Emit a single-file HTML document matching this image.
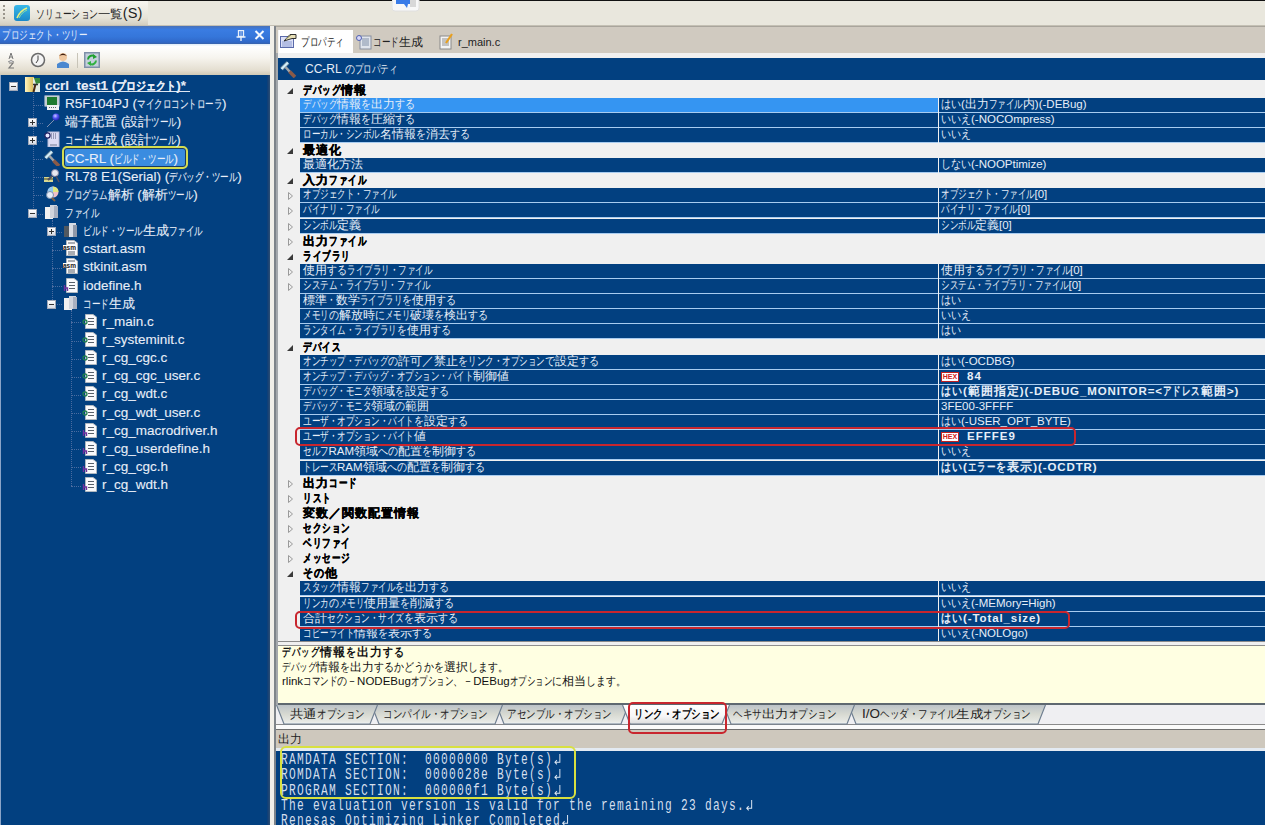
<!DOCTYPE html>
<html><head><meta charset="utf-8">
<style>
*{margin:0;padding:0;box-sizing:border-box}
html,body{width:1265px;height:825px;overflow:hidden;background:#ECE9DF;font-family:"Liberation Sans",sans-serif;font-size:12px;position:relative}
.a{position:absolute}
#topline{left:0;top:0;width:1265px;height:1px;background:#111}
#toolbar{left:0;top:1px;width:1265px;height:25px;background:#E9E7DD;border-bottom:1px solid #C4C0B4}
#solbtn{left:0;top:1px;width:148px;height:24px;background:linear-gradient(#F7F6F1,#E6E3D8 70%,#D3CEC0)}
#lhead{left:0;top:26px;width:270px;height:18px;background:linear-gradient(#4A72B8 0,#3A7CE2 20%,#3576DA 60%,#3068C8 90%,#3A62A8 100%);color:#E6EEFA}
#ltool{left:0;top:44px;width:270px;height:31px;background:linear-gradient(#DDEAF8,#FFFFFF 8%,#F6F4EE 45%,#E4DED0 85%,#D2CAB6)}
#tree{left:0;top:75px;width:270px;height:750px;background:#024080;border-left:1px solid #8AA4C8}
#split{left:270px;top:26px;width:4px;height:799px;background:#F1EFE9}
#vline{left:274px;top:26px;width:2px;height:799px;background:#7E848A}
#pline{left:276px;top:53px;width:2px;height:652px;background:#A4A8AC}
#tabs{left:276px;top:26px;width:989px;height:27px;background:#D0CAC0;border-top:1px solid #A9A59C}
#grid{left:276px;top:53px;width:989px;height:652px;background:#F0F0F0}
#phead{left:278px;top:58px;width:987px;height:22px;background:#024080;color:#E8EEF6}
#desc{left:278px;top:645px;width:987px;height:60px;background:#FFFFE2;border-top:1px solid #8E8E8E;border-bottom:2px solid #5E6870}
#dline{left:278px;top:641px;width:987px;height:1px;background:#8A8A8A}
#btabs{left:276px;top:705px;width:989px;height:20px;background:#EFEFF2;border-bottom:1px solid #8A8A8A}
#wstrip{left:276px;top:725px;width:989px;height:5px;background:#FAFAFA;border-bottom:1px solid #6E6E6E}
#ohead{left:276px;top:730px;width:989px;height:18px;background:#CEC8BD}
#oline{left:276px;top:748px;width:989px;height:3px;background:#E3EAF2}
#out{left:276px;top:751px;width:989px;height:74px;background:#024080}
.cat{left:303px;height:15px;line-height:15px;font-weight:bold;color:#000;font-size:12px;white-space:nowrap;-webkit-text-stroke:.35px #000}
.pn{left:300px;width:638px;height:15px;line-height:12.5px;border-bottom:1px solid #A8CCF0;background:#024080;color:#E6EEF8;padding-left:3px;white-space:nowrap;font-size:11.5px;overflow:hidden}
.pn.sel{background:#3595F2}
.pv{left:939px;width:326px;height:15px;line-height:12.5px;border-bottom:1px solid #A8CCF0;background:#024080;color:#E6EEF8;padding-left:2px;white-space:nowrap;font-size:11.5px;overflow:hidden}
.pv.bold{font-weight:bold;letter-spacing:.9px}
.pv.bold i,.cat i,.dbold i{margin-right:1px}
.hb{letter-spacing:1px}
.hex{display:inline-block;width:18px;height:10px;border:1px solid #C02020;background:#fff;color:#D02020;font-size:7px;line-height:8px;font-weight:bold;text-align:center;vertical-align:middle;margin-right:8px}
.hb{font-weight:bold}
.tt{height:18px;line-height:19px;color:#E8EEF8;font-size:13.5px;white-space:nowrap;-webkit-text-stroke:.1px #E8EEF8}
i{font-style:normal}
.k{display:inline-block;width:12px;font-size:12px}
.h{display:inline-block;width:10px;font-size:12px;transform:scaleX(.83);transform-origin:0 0}
.n{display:inline-block;width:8.5px;font-size:12px;transform:scaleX(.71);transform-origin:0 0}
.tt .k{width:13px;font-size:13px}
.projt{font-weight:bold}
.projt .n{width:10px;transform:scaleX(.83)}
.exb{width:9px;height:9px;background:linear-gradient(#FFFFFF,#D8DCE4);border:1px solid #A0A8B8}
.hb1{position:absolute;left:1px;top:3px;width:5px;height:1px;background:#333}
.vb1{position:absolute;left:3px;top:1px;width:1px;height:5px;background:#333}

.lt{color:#E6EEFA;font-size:12px;white-space:nowrap;line-height:18px}
.grip{left:3px;top:5px;width:2px;height:16px;background:repeating-linear-gradient(#9A968C 0 2px,transparent 2px 4px)}
.toptext{left:36px;top:4px;font-size:14px;color:#222;line-height:18px;white-space:nowrap;transform:scaleX(1.04);transform-origin:0 0}
.ttab{top:30px;height:24px;line-height:24px;font-size:12px;color:#222;white-space:nowrap}
#acttab{left:278px;top:30px;width:75px;height:24px;background:#FFFFFF;border-left:1px solid #F4F4F4}
.phtext{left:305px;top:60px;line-height:18px;font-size:12px;color:#E8EEF6;white-space:nowrap}
.dtext{left:282px;font-size:11.5px;color:#111;white-space:nowrap;line-height:14px}
.btab{top:705px;height:19px}
.btext{top:705px;line-height:18px;font-size:12px;color:#222;white-space:nowrap;transform:scaleX(1.12);transform-origin:0 0}
.otext{left:281px;font-family:"Liberation Mono",monospace;font-size:16px;letter-spacing:1.83px;color:#D4DEEC;white-space:pre;line-height:15px;transform:scaleX(.7);transform-origin:0 0}
.rbox{border:2px solid #C8262E;border-radius:5px}
.ybox{border:2.5px solid #D8E040;border-radius:6px}
.ret{display:inline-block;width:11.4px;height:12px;vertical-align:-2px;transform:scaleX(1.3);transform-origin:0 0}
.vl{border-left:1px dotted #4A6CA0;width:1px}
.hl{border-top:1px dotted #4A6CA0;height:1px}
</style></head><body>
<div class="a" id="topline"></div>
<div class="a" id="toolbar"></div>
<div class="a" id="solbtn"></div>
<div class="a grip"></div>
<svg class="a" style="left:13px;top:4px" width="18" height="18" viewBox="0 0 18 18"><defs><linearGradient id="g1" x1="0" y1="0" x2="0" y2="1"><stop offset="0" stop-color="#38B8E8"/><stop offset="1" stop-color="#1A88C8"/></linearGradient></defs><rect x="1" y="1" width="16" height="16" rx="3" fill="url(#g1)"/><path d="M4 14 C6 9 9 6 14 4" stroke="#E8F080" stroke-width="1.6" fill="none"/><path d="M6 14 C8 10 10 8 14 6" stroke="#90E0A0" stroke-width="1" fill="none"/></svg>
<div class="a toptext"><i class="n">ソ</i><i class="n">リ</i><i class="n">ュ</i><i class="n">ー</i><i class="n">シ</i><i class="n">ョ</i><i class="n">ン</i><i class="k">一</i><i class="k">覧</i>(S)</div>
<svg class="a" style="left:392px;top:0px" width="28" height="12" viewBox="0 0 28 12"><rect x="0" y="-4" width="27" height="15" rx="3" fill="#F8F8F8" stroke="#E0E0E0"/><path d="M4 0 H20 V4 H16 L15 8 L12 4 H4Z" fill="#3A7CE8"/><rect x="18" y="0" width="6" height="7" fill="#D8D8D8"/></svg>
<div class="a" id="lhead"></div>
<div class="a lt" style="left:2px;top:26px"><i class="n">プ</i><i class="n">ロ</i><i class="n">ジ</i><i class="n">ェ</i><i class="n">ク</i><i class="n">ト</i><i class="n">・</i><i class="n">ツ</i><i class="n">リ</i><i class="n">ー</i></div>
<svg class="a" style="left:236px;top:30px" width="10" height="11" viewBox="0 0 10 11"><rect x="2.5" y="0.5" width="5" height="6" fill="none" stroke="#E8F0FA" stroke-width="1.3"/><path d="M5 1v5" stroke="#B0C4E8" stroke-width="1"/><path d="M0.5 7h9M5 7v4" stroke="#E8F0FA" stroke-width="1.4"/></svg>
<svg class="a" style="left:254px;top:30px" width="11" height="10" viewBox="0 0 11 10"><path d="M1.5 1L9.5 9M9.5 1L1.5 9" stroke="#F4F8FF" stroke-width="2"/></svg>
<div class="a" id="ltool"></div>
<svg class="a" style="left:6px;top:52px" width="10" height="17" viewBox="0 0 10 17"><path d="M3 7 L5 1 L7 7 M3.5 5h3" stroke="#777" stroke-width="1" fill="none"/><path d="M2 10 Q5 7 8 10" stroke="#888" fill="#E8E8F0"/><path d="M3 11 H7 L3 16 H8" stroke="#777" stroke-width="1.2" fill="none"/></svg>
<svg class="a" style="left:30px;top:52px" width="16" height="16" viewBox="0 0 16 16"><circle cx="8" cy="8" r="6.5" fill="#F4F4F4" stroke="#6A6A6A" stroke-width="1.5"/><path d="M8 3.5V8L6 11" stroke="#444" stroke-width="1" fill="none"/></svg>
<svg class="a" style="left:56px;top:52px" width="14" height="17" viewBox="0 0 14 17"><circle cx="7" cy="5" r="4" fill="#F0C8A0"/><path d="M3 4 Q7 -1 11 4 Q7 2 3 4Z" fill="#402010"/><path d="M1 16 V12 Q7 7 13 12 V16Z" fill="#4A88D0"/></svg>
<div class="a" style="left:77px;top:53px;width:1px;height:15px;background:#C8C4B8"></div>
<svg class="a" style="left:84px;top:52px" width="16" height="16" viewBox="0 0 16 16"><rect x="0.75" y="0.75" width="14.5" height="14.5" fill="#C4D0DC" stroke="#7E90A8" stroke-width="1.5"/><path d="M4 7.5 A4 4 0 0 1 10.5 4.5" stroke="#20A030" stroke-width="2" fill="none"/><path d="M9 2 L13 5 L9 7Z" fill="#20A030"/><path d="M12 8.5 A4 4 0 0 1 5.5 11.5" stroke="#30B040" stroke-width="2" fill="none"/><path d="M7 14 L3 11 L7 9Z" fill="#30B040"/></svg>
<div class="a" id="tree"></div>
<div class="a" style="left:45px;top:91px;width:145px;height:1px;background:#DDE6F2"></div>
<div class="a" style="left:62px;top:146px;width:126px;height:23px;border:2px solid #D4DC50;border-radius:5px;background:#3A8CE0;box-shadow:inset 0 0 0 1px #1A3A60"></div>
<div class="a vl" style="left:33px;top:92.5px;height:121.0px"></div>
<div class="a hl" style="left:33px;top:104.6px;width:10px"></div>
<div class="a hl" style="left:38px;top:122.8px;width:5px"></div>
<div class="a hl" style="left:38px;top:140.9px;width:5px"></div>
<div class="a hl" style="left:33px;top:159.1px;width:10px"></div>
<div class="a hl" style="left:33px;top:177.2px;width:10px"></div>
<div class="a hl" style="left:33px;top:195.3px;width:10px"></div>
<div class="a hl" style="left:38px;top:213.5px;width:5px"></div>
<div class="a vl" style="left:52px;top:219.5px;height:84.7px"></div>
<div class="a hl" style="left:57px;top:231.6px;width:5px"></div>
<div class="a hl" style="left:52px;top:249.8px;width:10px"></div>
<div class="a hl" style="left:52px;top:267.9px;width:10px"></div>
<div class="a hl" style="left:52px;top:286.0px;width:10px"></div>
<div class="a hl" style="left:57px;top:304.2px;width:5px"></div>
<div class="a vl" style="left:71px;top:310.2px;height:175.4px"></div>
<div class="a hl" style="left:71px;top:322.3px;width:10px"></div>
<div class="a hl" style="left:71px;top:340.5px;width:10px"></div>
<div class="a hl" style="left:71px;top:358.6px;width:10px"></div>
<div class="a hl" style="left:71px;top:376.7px;width:10px"></div>
<div class="a hl" style="left:71px;top:394.9px;width:10px"></div>
<div class="a hl" style="left:71px;top:413.0px;width:10px"></div>
<div class="a hl" style="left:71px;top:431.2px;width:10px"></div>
<div class="a hl" style="left:71px;top:449.3px;width:10px"></div>
<div class="a hl" style="left:71px;top:467.4px;width:10px"></div>
<div class="a hl" style="left:71px;top:485.6px;width:10px"></div>
<svg class="a" style="left:25px;top:77.00px" width="16" height="16" viewBox="0 0 16 16"><defs><linearGradient id="pj" x1="0" x2="1"><stop offset="0" stop-color="#FFF4C0"/><stop offset="1" stop-color="#D8B850"/></linearGradient></defs><rect x="0" y="0" width="9" height="15" fill="url(#pj)"/><rect x="8" y="1" width="7" height="14" fill="#E4ECE4"/><path d="M9 1 H15 V6 L11 7Z" fill="#3A8A3A"/><path d="M8.5 15 L10.5 7" stroke="#4A2A10" stroke-width="2"/><path d="M8 7.5 H13" stroke="#303030" stroke-width="1.5"/></svg>
<div class="a tt projt" style="left:45px;top:76.00px">ccrl_test1 (<i class="n">プ</i><i class="n">ロ</i><i class="n">ジ</i><i class="n">ェ</i><i class="n">ク</i><i class="n">ト</i>)*</div>
<div class="a exb" style="left:9px;top:82.00px"><span class="hb1"></span></div>
<svg class="a" style="left:44px;top:95.14px" width="16" height="16" viewBox="0 0 16 16"><rect x="0.5" y="0.5" width="15" height="11" fill="#D8DEE4"/><path d="M2 0.5v11M4 0.5v11M6 0.5v11M8 0.5v11M10 0.5v11M12 0.5v11M14 0.5v11" stroke="#A8B0B8" stroke-width=".8"/><rect x="3" y="2" width="10" height="8" fill="#1E7A30"/><rect x="3" y="10" width="12" height="5" fill="#F0F2F4"/><path d="M5 12.5h8" stroke="#606870" stroke-dasharray="1 1"/></svg>
<div class="a tt" style="left:65px;top:94.14px">R5F104PJ (<i class="n">マ</i><i class="n">イ</i><i class="n">ク</i><i class="n">ロ</i><i class="n">コ</i><i class="n">ン</i><i class="n">ト</i><i class="n">ロ</i><i class="n">ー</i><i class="n">ラ</i>)</div>
<svg class="a" style="left:44px;top:113.28px" width="16" height="16" viewBox="0 0 16 16"><defs><radialGradient id="pb" cx=".4" cy=".35" r=".7"><stop offset="0" stop-color="#C8C8FF"/><stop offset=".5" stop-color="#5050F0"/><stop offset="1" stop-color="#2020A0"/></radialGradient></defs><path d="M3 14 L11 6" stroke="#8090B0" stroke-width="1"/><circle cx="12" cy="4" r="3.6" fill="url(#pb)"/></svg>
<div class="a tt" style="left:65px;top:112.28px"><i class="k">端</i><i class="k">子</i><i class="k">配</i><i class="k">置</i> (<i class="k">設</i><i class="k">計</i><i class="n">ツ</i><i class="n">ー</i><i class="n">ル</i>)</div>
<div class="a exb" style="left:28px;top:118.28px"><span class="hb1"></span><span class="vb1"></span></div>
<svg class="a" style="left:44px;top:131.42px" width="16" height="16" viewBox="0 0 16 16"><rect x="4" y="1" width="11" height="15" fill="#DCDCF4" stroke="#B8BCD8"/><path d="M7 3h6M7 5h6M7 7h6" stroke="#505878" stroke-dasharray="1 1"/><circle cx="3.5" cy="4.5" r="2.6" fill="#E8E8FF" stroke="#202060" stroke-width="1.2"/><path d="M6 14h7" stroke="#707890"/></svg>
<div class="a tt" style="left:65px;top:130.42px"><i class="n">コ</i><i class="n">ー</i><i class="n">ド</i><i class="k">生</i><i class="k">成</i> (<i class="k">設</i><i class="k">計</i><i class="n">ツ</i><i class="n">ー</i><i class="n">ル</i>)</div>
<div class="a exb" style="left:28px;top:136.42px"><span class="hb1"></span><span class="vb1"></span></div>
<svg class="a" style="left:44px;top:149.56px" width="16" height="16" viewBox="0 0 16 16"><path d="M1.5 8 L8 1.5" stroke="#5A7890" stroke-width="4"/><path d="M1.5 8 L8 1.5" stroke="#D4EEF8" stroke-width="2.4"/><path d="M5.5 6 L10 11" stroke="#A0A4A8" stroke-width="2.6"/><path d="M9.5 10.5 L15 16" stroke="#8A5A48" stroke-width="3.6"/></svg>
<div class="a tt selt" style="left:65px;top:148.56px">CC-RL (<i class="n">ビ</i><i class="n">ル</i><i class="n">ド</i><i class="n">・</i><i class="n">ツ</i><i class="n">ー</i><i class="n">ル</i>)</div>
<svg class="a" style="left:44px;top:167.70px" width="16" height="16" viewBox="0 0 16 16"><rect x="0" y="9" width="9" height="5" fill="#D8D890"/><path d="M0 11h9" stroke="#404020"/><circle cx="11" cy="5" r="3.5" fill="#E8E8F0" stroke="#8080A0"/><path d="M8 8 L4 12" stroke="#505060" stroke-width="2"/><path d="M12 8 L15 14" stroke="#505060" stroke-width="1.5"/></svg>
<div class="a tt" style="left:65px;top:166.70px">RL78 E1(Serial) (<i class="n">デ</i><i class="n">バ</i><i class="n">ッ</i><i class="n">グ</i><i class="n">・</i><i class="n">ツ</i><i class="n">ー</i><i class="n">ル</i>)</div>
<svg class="a" style="left:44px;top:185.84px" width="16" height="16" viewBox="0 0 16 16"><circle cx="9" cy="6" r="5.5" fill="#F0C0C8"/><path d="M9 6 L9 0.5 A5.5 5.5 0 0 1 14.5 6Z" fill="#E0E880"/><path d="M9 6 L3.5 6 A5.5 5.5 0 0 1 9 0.5Z" fill="#90C8F0"/><circle cx="6" cy="9" r="3.5" fill="#E8EEF8" stroke="#7890B0"/><path d="M8 12 L11 15" stroke="#806040" stroke-width="2"/></svg>
<div class="a tt" style="left:65px;top:184.84px"><i class="n">プ</i><i class="n">ロ</i><i class="n">グ</i><i class="n">ラ</i><i class="n">ム</i><i class="k">解</i><i class="k">析</i> (<i class="k">解</i><i class="k">析</i><i class="n">ツ</i><i class="n">ー</i><i class="n">ル</i>)</div>
<svg class="a" style="left:44px;top:203.98px" width="16" height="16" viewBox="0 0 16 16"><rect x="1" y="3" width="8" height="12" fill="#F0F0F0"/><rect x="6" y="1" width="7" height="13" fill="#D0D4DC"/><rect x="10" y="2" width="4" height="12" fill="#A8B0C0"/></svg>
<div class="a tt" style="left:65px;top:202.98px"><i class="n">フ</i><i class="n">ァ</i><i class="n">イ</i><i class="n">ル</i></div>
<div class="a exb" style="left:28px;top:208.98px"><span class="hb1"></span></div>
<svg class="a" style="left:63px;top:222.12px" width="16" height="16" viewBox="0 0 16 16"><rect x="1" y="4" width="8" height="11" fill="#505860"/><rect x="6" y="1" width="7" height="14" fill="#D8DCE4"/><rect x="10" y="3" width="4" height="12" fill="#9098A8"/></svg>
<div class="a tt" style="left:83px;top:221.12px"><i class="n">ビ</i><i class="n">ル</i><i class="n">ド</i><i class="n">・</i><i class="n">ツ</i><i class="n">ー</i><i class="n">ル</i><i class="k">生</i><i class="k">成</i><i class="n">フ</i><i class="n">ァ</i><i class="n">イ</i><i class="n">ル</i></div>
<div class="a exb" style="left:47px;top:227.12px"><span class="hb1"></span><span class="vb1"></span></div>
<svg class="a" style="left:63px;top:240.26px" width="16" height="16" viewBox="0 0 16 16"><path d="M3.5 0.5 H11 L14.5 3 V15.5 H3.5Z" fill="#FAFAFC" stroke="#B0B8C0"/><path d="M5 3h7" stroke="#58606A"/><rect x="0" y="5" width="14" height="5" fill="#FFFFFF"/><text x="0" y="9.6" font-size="6.5" fill="#202020" font-family="Liberation Sans" font-weight="bold">asm</text><path d="M5 12h7M5 14h7" stroke="#58606A"/></svg>
<div class="a tt" style="left:83px;top:239.26px">cstart.asm</div>
<svg class="a" style="left:63px;top:258.40px" width="16" height="16" viewBox="0 0 16 16"><path d="M3.5 0.5 H11 L14.5 3 V15.5 H3.5Z" fill="#FAFAFC" stroke="#B0B8C0"/><path d="M5 3h7" stroke="#58606A"/><rect x="0" y="5" width="14" height="5" fill="#FFFFFF"/><text x="0" y="9.6" font-size="6.5" fill="#202020" font-family="Liberation Sans" font-weight="bold">asm</text><path d="M5 12h7M5 14h7" stroke="#58606A"/></svg>
<div class="a tt" style="left:83px;top:257.40px">stkinit.asm</div>
<svg class="a" style="left:63px;top:276.54px" width="16" height="16" viewBox="0 0 16 16"><path d="M3.5 1.5 H11 L14.5 4 V15.5 H3.5Z" fill="#FAFAFC" stroke="#B0B8C0"/><path d="M6 5.5h6M6 8.5h6M6 11.5h6" stroke="#58606A"/><path d="M1.5 8v6M1.5 11h3v3" stroke="#7030A0" stroke-width="1.4" fill="none"/></svg>
<div class="a tt" style="left:83px;top:275.54px">iodefine.h</div>
<svg class="a" style="left:63px;top:294.68px" width="16" height="16" viewBox="0 0 16 16"><rect x="1" y="3" width="8" height="12" fill="#F0F0F0"/><rect x="6" y="1" width="7" height="13" fill="#D0D4DC"/><rect x="10" y="2" width="4" height="12" fill="#A8B0C0"/></svg>
<div class="a tt" style="left:83px;top:293.68px"><i class="n">コ</i><i class="n">ー</i><i class="n">ド</i><i class="k">生</i><i class="k">成</i></div>
<div class="a exb" style="left:47px;top:299.68px"><span class="hb1"></span></div>
<svg class="a" style="left:82px;top:312.82px" width="16" height="16" viewBox="0 0 16 16"><path d="M3.5 1.5 H11 L14.5 4 V15.5 H3.5Z" fill="#FAFAFC" stroke="#B0B8C0"/><path d="M6 5.5h6M6 8.5h6M6 11.5h6" stroke="#58606A"/><circle cx="3" cy="9" r="2" fill="none" stroke="#208050" stroke-width="1.3"/></svg>
<div class="a tt" style="left:102px;top:311.82px">r_main.c</div>
<svg class="a" style="left:82px;top:330.96px" width="16" height="16" viewBox="0 0 16 16"><path d="M3.5 1.5 H11 L14.5 4 V15.5 H3.5Z" fill="#FAFAFC" stroke="#B0B8C0"/><path d="M6 5.5h6M6 8.5h6M6 11.5h6" stroke="#58606A"/><circle cx="3" cy="9" r="2" fill="none" stroke="#208050" stroke-width="1.3"/></svg>
<div class="a tt" style="left:102px;top:329.96px">r_systeminit.c</div>
<svg class="a" style="left:82px;top:349.10px" width="16" height="16" viewBox="0 0 16 16"><path d="M3.5 1.5 H11 L14.5 4 V15.5 H3.5Z" fill="#FAFAFC" stroke="#B0B8C0"/><path d="M6 5.5h6M6 8.5h6M6 11.5h6" stroke="#58606A"/><circle cx="3" cy="9" r="2" fill="none" stroke="#208050" stroke-width="1.3"/></svg>
<div class="a tt" style="left:102px;top:348.10px">r_cg_cgc.c</div>
<svg class="a" style="left:82px;top:367.24px" width="16" height="16" viewBox="0 0 16 16"><path d="M3.5 1.5 H11 L14.5 4 V15.5 H3.5Z" fill="#FAFAFC" stroke="#B0B8C0"/><path d="M6 5.5h6M6 8.5h6M6 11.5h6" stroke="#58606A"/><circle cx="3" cy="9" r="2" fill="none" stroke="#208050" stroke-width="1.3"/></svg>
<div class="a tt" style="left:102px;top:366.24px">r_cg_cgc_user.c</div>
<svg class="a" style="left:82px;top:385.38px" width="16" height="16" viewBox="0 0 16 16"><path d="M3.5 1.5 H11 L14.5 4 V15.5 H3.5Z" fill="#FAFAFC" stroke="#B0B8C0"/><path d="M6 5.5h6M6 8.5h6M6 11.5h6" stroke="#58606A"/><circle cx="3" cy="9" r="2" fill="none" stroke="#208050" stroke-width="1.3"/></svg>
<div class="a tt" style="left:102px;top:384.38px">r_cg_wdt.c</div>
<svg class="a" style="left:82px;top:403.52px" width="16" height="16" viewBox="0 0 16 16"><path d="M3.5 1.5 H11 L14.5 4 V15.5 H3.5Z" fill="#FAFAFC" stroke="#B0B8C0"/><path d="M6 5.5h6M6 8.5h6M6 11.5h6" stroke="#58606A"/><circle cx="3" cy="9" r="2" fill="none" stroke="#208050" stroke-width="1.3"/></svg>
<div class="a tt" style="left:102px;top:402.52px">r_cg_wdt_user.c</div>
<svg class="a" style="left:82px;top:421.66px" width="16" height="16" viewBox="0 0 16 16"><path d="M3.5 1.5 H11 L14.5 4 V15.5 H3.5Z" fill="#FAFAFC" stroke="#B0B8C0"/><path d="M6 5.5h6M6 8.5h6M6 11.5h6" stroke="#58606A"/><path d="M1.5 8v6M1.5 11h3v3" stroke="#7030A0" stroke-width="1.4" fill="none"/></svg>
<div class="a tt" style="left:102px;top:420.66px">r_cg_macrodriver.h</div>
<svg class="a" style="left:82px;top:439.80px" width="16" height="16" viewBox="0 0 16 16"><path d="M3.5 1.5 H11 L14.5 4 V15.5 H3.5Z" fill="#FAFAFC" stroke="#B0B8C0"/><path d="M6 5.5h6M6 8.5h6M6 11.5h6" stroke="#58606A"/><path d="M1.5 8v6M1.5 11h3v3" stroke="#7030A0" stroke-width="1.4" fill="none"/></svg>
<div class="a tt" style="left:102px;top:438.80px">r_cg_userdefine.h</div>
<svg class="a" style="left:82px;top:457.94px" width="16" height="16" viewBox="0 0 16 16"><path d="M3.5 1.5 H11 L14.5 4 V15.5 H3.5Z" fill="#FAFAFC" stroke="#B0B8C0"/><path d="M6 5.5h6M6 8.5h6M6 11.5h6" stroke="#58606A"/><path d="M1.5 8v6M1.5 11h3v3" stroke="#7030A0" stroke-width="1.4" fill="none"/></svg>
<div class="a tt" style="left:102px;top:456.94px">r_cg_cgc.h</div>
<svg class="a" style="left:82px;top:476.08px" width="16" height="16" viewBox="0 0 16 16"><path d="M3.5 1.5 H11 L14.5 4 V15.5 H3.5Z" fill="#FAFAFC" stroke="#B0B8C0"/><path d="M6 5.5h6M6 8.5h6M6 11.5h6" stroke="#58606A"/><path d="M1.5 8v6M1.5 11h3v3" stroke="#7030A0" stroke-width="1.4" fill="none"/></svg>
<div class="a tt" style="left:102px;top:475.08px">r_cg_wdt.h</div>
<div class="a" style="left:267px;top:75px;width:3px;height:750px;background:linear-gradient(90deg,#0A3C78,#2E4E72)"></div>
<div class="a" id="split"></div>
<div class="a" id="vline"></div>
<div class="a" id="tabs"></div>
<div class="a" id="acttab"></div>
<svg class="a" style="left:280px;top:32px" width="17" height="16" viewBox="0 0 17 16"><rect x="0.5" y="4.5" width="13" height="11" fill="#DCE0F6" stroke="#5A6AAA"/><path d="M2 10h10M2 12h10M2 14h10" stroke="#8A9AD0"/><path d="M4 9 L10 2.5 L16 2.5 L16 6.5 L12 6.5 Z" fill="#E8E0B8" stroke="#303030" stroke-width="1"/><path d="M6 7 L11 3" stroke="#909060" stroke-width="1"/></svg>
<div class="a ttab" style="left:301px;font-size:12.5px"><i class="n">プ</i><i class="n">ロ</i><i class="n">パ</i><i class="n">テ</i><i class="n">ィ</i></div>
<svg class="a" style="left:356px;top:34px" width="16" height="16" viewBox="0 0 16 16"><rect x="4" y="2" width="11" height="13" fill="#E0E4EC" stroke="#8890A0"/><path d="M6 5h7M6 7h7M6 9h7M6 11h7" stroke="#8090A8"/><circle cx="3" cy="4" r="2.5" fill="#D8D8F8" stroke="#5060B0"/></svg>
<div class="a ttab" style="left:373px"><i class="n">コ</i><i class="n">ー</i><i class="n">ド</i><i class="k">生</i><i class="k">成</i></div>
<svg class="a" style="left:439px;top:33px" width="15" height="17" viewBox="0 0 15 17"><rect x="1" y="3" width="11" height="13" fill="#F4F4F4" stroke="#8A8A8A"/><path d="M3 6h6M3 8h7M3 10h7M3 12h7" stroke="#909090"/><path d="M7 10 L13 1" stroke="#E8A020" stroke-width="2.2"/></svg>
<div class="a ttab" style="left:458px;font-size:11px">r_main.c</div>
<div class="a" id="grid"></div>
<div class="a" id="pline"></div>
<div class="a" id="phead"></div>
<svg class="a" style="left:280px;top:61px" width="17" height="17" viewBox="0 0 17 17"><path d="M1.5 8 L8 1.5" stroke="#5A7890" stroke-width="4"/><path d="M1.5 8 L8 1.5" stroke="#D4EEF8" stroke-width="2.4"/><path d="M5.5 6 L10 11" stroke="#A0A4A8" stroke-width="2.6"/><path d="M9.5 10.5 L15 16" stroke="#8A5A48" stroke-width="3.6"/></svg>
<div class="a phtext">CC-RL <i class="h">の</i><i class="n">プ</i><i class="n">ロ</i><i class="n">パ</i><i class="n">テ</i><i class="n">ィ</i></div>
<svg class="a" style="left:286px;top:86.50px" width="8" height="8" viewBox="0 0 8 8"><path d="M7 1 L7 7 L1 7 Z" fill="#3A3A3A"/></svg>
<div class="a cat" style="top:82.50px"><i class="n">デ</i><i class="n">バ</i><i class="n">ッ</i><i class="n">グ</i><i class="k">情</i><i class="k">報</i></div>

<div class="a pn sel" style="top:97.62px"><i class="n">デ</i><i class="n">バ</i><i class="n">ッ</i><i class="n">グ</i><i class="k">情</i><i class="k">報</i><i class="h">を</i><i class="k">出</i><i class="k">力</i><i class="h">す</i><i class="h">る</i></div>
<div class="a pv" style="top:97.62px"><i class="h">は</i><i class="h">い</i>(<i class="k">出</i><i class="k">力</i><i class="n">フ</i><i class="n">ァ</i><i class="n">イ</i><i class="n">ル</i><i class="k">内</i>)(-DEBug)</div>

<div class="a pn" style="top:112.74px"><i class="n">デ</i><i class="n">バ</i><i class="n">ッ</i><i class="n">グ</i><i class="k">情</i><i class="k">報</i><i class="h">を</i><i class="k">圧</i><i class="k">縮</i><i class="h">す</i><i class="h">る</i></div>
<div class="a pv" style="top:112.74px"><i class="h">い</i><i class="h">い</i><i class="h">え</i>(-NOCOmpress)</div>

<div class="a pn" style="top:127.86px"><i class="n">ロ</i><i class="n">ー</i><i class="n">カ</i><i class="n">ル</i><i class="n">・</i><i class="n">シ</i><i class="n">ン</i><i class="n">ボ</i><i class="n">ル</i><i class="k">名</i><i class="k">情</i><i class="k">報</i><i class="h">を</i><i class="k">消</i><i class="k">去</i><i class="h">す</i><i class="h">る</i></div>
<div class="a pv" style="top:127.86px"><i class="h">い</i><i class="h">い</i><i class="h">え</i></div>
<svg class="a" style="left:286px;top:146.98px" width="8" height="8" viewBox="0 0 8 8"><path d="M7 1 L7 7 L1 7 Z" fill="#3A3A3A"/></svg>
<div class="a cat" style="top:142.98px"><i class="k">最</i><i class="k">適</i><i class="k">化</i></div>

<div class="a pn" style="top:158.10px"><i class="k">最</i><i class="k">適</i><i class="k">化</i><i class="k">方</i><i class="k">法</i></div>
<div class="a pv" style="top:158.10px"><i class="h">し</i><i class="h">な</i><i class="h">い</i>(-NOOPtimize)</div>
<svg class="a" style="left:286px;top:177.22px" width="8" height="8" viewBox="0 0 8 8"><path d="M7 1 L7 7 L1 7 Z" fill="#3A3A3A"/></svg>
<div class="a cat" style="top:173.22px"><i class="k">入</i><i class="k">力</i><i class="n">フ</i><i class="n">ァ</i><i class="n">イ</i><i class="n">ル</i></div>
<svg class="a" style="left:286px;top:191.34px" width="8" height="10" viewBox="0 0 8 10"><path d="M2.5 1.5 L6.5 5 L2.5 8.5 Z" fill="none" stroke="#9A9A9A" stroke-width="1"/></svg>
<div class="a pn" style="top:188.34px"><i class="n">オ</i><i class="n">ブ</i><i class="n">ジ</i><i class="n">ェ</i><i class="n">ク</i><i class="n">ト</i><i class="n">・</i><i class="n">フ</i><i class="n">ァ</i><i class="n">イ</i><i class="n">ル</i></div>
<div class="a pv" style="top:188.34px"><i class="n">オ</i><i class="n">ブ</i><i class="n">ジ</i><i class="n">ェ</i><i class="n">ク</i><i class="n">ト</i><i class="n">・</i><i class="n">フ</i><i class="n">ァ</i><i class="n">イ</i><i class="n">ル</i>[0]</div>
<svg class="a" style="left:286px;top:206.46px" width="8" height="10" viewBox="0 0 8 10"><path d="M2.5 1.5 L6.5 5 L2.5 8.5 Z" fill="none" stroke="#9A9A9A" stroke-width="1"/></svg>
<div class="a pn" style="top:203.46px"><i class="n">バ</i><i class="n">イ</i><i class="n">ナ</i><i class="n">リ</i><i class="n">・</i><i class="n">フ</i><i class="n">ァ</i><i class="n">イ</i><i class="n">ル</i></div>
<div class="a pv" style="top:203.46px"><i class="n">バ</i><i class="n">イ</i><i class="n">ナ</i><i class="n">リ</i><i class="n">・</i><i class="n">フ</i><i class="n">ァ</i><i class="n">イ</i><i class="n">ル</i>[0]</div>
<svg class="a" style="left:286px;top:221.58px" width="8" height="10" viewBox="0 0 8 10"><path d="M2.5 1.5 L6.5 5 L2.5 8.5 Z" fill="none" stroke="#9A9A9A" stroke-width="1"/></svg>
<div class="a pn" style="top:218.58px"><i class="n">シ</i><i class="n">ン</i><i class="n">ボ</i><i class="n">ル</i><i class="k">定</i><i class="k">義</i></div>
<div class="a pv" style="top:218.58px"><i class="n">シ</i><i class="n">ン</i><i class="n">ボ</i><i class="n">ル</i><i class="k">定</i><i class="k">義</i>[0]</div>
<svg class="a" style="left:286px;top:236.70px" width="8" height="10" viewBox="0 0 8 10"><path d="M2.5 1.5 L6.5 5 L2.5 8.5 Z" fill="none" stroke="#9A9A9A" stroke-width="1"/></svg>
<div class="a cat" style="top:233.70px"><i class="k">出</i><i class="k">力</i><i class="n">フ</i><i class="n">ァ</i><i class="n">イ</i><i class="n">ル</i></div>
<svg class="a" style="left:286px;top:252.82px" width="8" height="8" viewBox="0 0 8 8"><path d="M7 1 L7 7 L1 7 Z" fill="#3A3A3A"/></svg>
<div class="a cat" style="top:248.82px"><i class="n">ラ</i><i class="n">イ</i><i class="n">ブ</i><i class="n">ラ</i><i class="n">リ</i></div>
<svg class="a" style="left:286px;top:266.94px" width="8" height="10" viewBox="0 0 8 10"><path d="M2.5 1.5 L6.5 5 L2.5 8.5 Z" fill="none" stroke="#9A9A9A" stroke-width="1"/></svg>
<div class="a pn" style="top:263.94px"><i class="k">使</i><i class="k">用</i><i class="h">す</i><i class="h">る</i><i class="n">ラ</i><i class="n">イ</i><i class="n">ブ</i><i class="n">ラ</i><i class="n">リ</i><i class="n">・</i><i class="n">フ</i><i class="n">ァ</i><i class="n">イ</i><i class="n">ル</i></div>
<div class="a pv" style="top:263.94px"><i class="k">使</i><i class="k">用</i><i class="h">す</i><i class="h">る</i><i class="n">ラ</i><i class="n">イ</i><i class="n">ブ</i><i class="n">ラ</i><i class="n">リ</i><i class="n">・</i><i class="n">フ</i><i class="n">ァ</i><i class="n">イ</i><i class="n">ル</i>[0]</div>
<svg class="a" style="left:286px;top:282.06px" width="8" height="10" viewBox="0 0 8 10"><path d="M2.5 1.5 L6.5 5 L2.5 8.5 Z" fill="none" stroke="#9A9A9A" stroke-width="1"/></svg>
<div class="a pn" style="top:279.06px"><i class="n">シ</i><i class="n">ス</i><i class="n">テ</i><i class="n">ム</i><i class="n">・</i><i class="n">ラ</i><i class="n">イ</i><i class="n">ブ</i><i class="n">ラ</i><i class="n">リ</i><i class="n">・</i><i class="n">フ</i><i class="n">ァ</i><i class="n">イ</i><i class="n">ル</i></div>
<div class="a pv" style="top:279.06px"><i class="n">シ</i><i class="n">ス</i><i class="n">テ</i><i class="n">ム</i><i class="n">・</i><i class="n">ラ</i><i class="n">イ</i><i class="n">ブ</i><i class="n">ラ</i><i class="n">リ</i><i class="n">・</i><i class="n">フ</i><i class="n">ァ</i><i class="n">イ</i><i class="n">ル</i>[0]</div>

<div class="a pn" style="top:294.18px"><i class="k">標</i><i class="k">準</i><i class="n">・</i><i class="k">数</i><i class="k">学</i><i class="n">ラ</i><i class="n">イ</i><i class="n">ブ</i><i class="n">ラ</i><i class="n">リ</i><i class="h">を</i><i class="k">使</i><i class="k">用</i><i class="h">す</i><i class="h">る</i></div>
<div class="a pv" style="top:294.18px"><i class="h">は</i><i class="h">い</i></div>

<div class="a pn" style="top:309.30px"><i class="n">メ</i><i class="n">モ</i><i class="n">リ</i><i class="h">の</i><i class="k">解</i><i class="k">放</i><i class="k">時</i><i class="h">に</i><i class="n">メ</i><i class="n">モ</i><i class="n">リ</i><i class="k">破</i><i class="k">壊</i><i class="h">を</i><i class="k">検</i><i class="k">出</i><i class="h">す</i><i class="h">る</i></div>
<div class="a pv" style="top:309.30px"><i class="h">い</i><i class="h">い</i><i class="h">え</i></div>

<div class="a pn" style="top:324.42px"><i class="n">ラ</i><i class="n">ン</i><i class="n">タ</i><i class="n">イ</i><i class="n">ム</i><i class="n">・</i><i class="n">ラ</i><i class="n">イ</i><i class="n">ブ</i><i class="n">ラ</i><i class="n">リ</i><i class="h">を</i><i class="k">使</i><i class="k">用</i><i class="h">す</i><i class="h">る</i></div>
<div class="a pv" style="top:324.42px"><i class="h">は</i><i class="h">い</i></div>
<svg class="a" style="left:286px;top:343.54px" width="8" height="8" viewBox="0 0 8 8"><path d="M7 1 L7 7 L1 7 Z" fill="#3A3A3A"/></svg>
<div class="a cat" style="top:339.54px"><i class="n">デ</i><i class="n">バ</i><i class="n">イ</i><i class="n">ス</i></div>

<div class="a pn" style="top:354.66px"><i class="n">オ</i><i class="n">ン</i><i class="n">チ</i><i class="n">ッ</i><i class="n">プ</i><i class="n">・</i><i class="n">デ</i><i class="n">バ</i><i class="n">ッ</i><i class="n">グ</i><i class="h">の</i><i class="k">許</i><i class="k">可</i><i class="k">／</i><i class="k">禁</i><i class="k">止</i><i class="h">を</i><i class="n">リ</i><i class="n">ン</i><i class="n">ク</i><i class="n">・</i><i class="n">オ</i><i class="n">プ</i><i class="n">シ</i><i class="n">ョ</i><i class="n">ン</i><i class="h">で</i><i class="k">設</i><i class="k">定</i><i class="h">す</i><i class="h">る</i></div>
<div class="a pv" style="top:354.66px"><i class="h">は</i><i class="h">い</i>(-OCDBG)</div>

<div class="a pn" style="top:369.78px"><i class="n">オ</i><i class="n">ン</i><i class="n">チ</i><i class="n">ッ</i><i class="n">プ</i><i class="n">・</i><i class="n">デ</i><i class="n">バ</i><i class="n">ッ</i><i class="n">グ</i><i class="n">・</i><i class="n">オ</i><i class="n">プ</i><i class="n">シ</i><i class="n">ョ</i><i class="n">ン</i><i class="n">・</i><i class="n">バ</i><i class="n">イ</i><i class="n">ト</i><i class="k">制</i><i class="k">御</i><i class="k">値</i></div>
<div class="a pv" style="top:369.78px"><span class="hex">HEX</span><b class="hb">84</b></div>

<div class="a pn" style="top:384.90px"><i class="n">デ</i><i class="n">バ</i><i class="n">ッ</i><i class="n">グ</i><i class="n">・</i><i class="n">モ</i><i class="n">ニ</i><i class="n">タ</i><i class="k">領</i><i class="k">域</i><i class="h">を</i><i class="k">設</i><i class="k">定</i><i class="h">す</i><i class="h">る</i></div>
<div class="a pv bold" style="top:384.90px"><i class="h">は</i><i class="h">い</i>(<i class="k">範</i><i class="k">囲</i><i class="k">指</i><i class="k">定</i>)(-DEBUG_MONITOR=&lt;<i class="n">ア</i><i class="n">ド</i><i class="n">レ</i><i class="n">ス</i><i class="k">範</i><i class="k">囲</i>&gt;)</div>

<div class="a pn" style="top:400.02px"><i class="n">デ</i><i class="n">バ</i><i class="n">ッ</i><i class="n">グ</i><i class="n">・</i><i class="n">モ</i><i class="n">ニ</i><i class="n">タ</i><i class="k">領</i><i class="k">域</i><i class="h">の</i><i class="k">範</i><i class="k">囲</i></div>
<div class="a pv" style="top:400.02px">3FE00-3FFFF</div>

<div class="a pn" style="top:415.14px"><i class="n">ユ</i><i class="n">ー</i><i class="n">ザ</i><i class="n">・</i><i class="n">オ</i><i class="n">プ</i><i class="n">シ</i><i class="n">ョ</i><i class="n">ン</i><i class="n">・</i><i class="n">バ</i><i class="n">イ</i><i class="n">ト</i><i class="h">を</i><i class="k">設</i><i class="k">定</i><i class="h">す</i><i class="h">る</i></div>
<div class="a pv" style="top:415.14px"><i class="h">は</i><i class="h">い</i>(-USER_OPT_BYTE)</div>

<div class="a pn" style="top:430.26px"><i class="n">ユ</i><i class="n">ー</i><i class="n">ザ</i><i class="n">・</i><i class="n">オ</i><i class="n">プ</i><i class="n">シ</i><i class="n">ョ</i><i class="n">ン</i><i class="n">・</i><i class="n">バ</i><i class="n">イ</i><i class="n">ト</i><i class="k">値</i></div>
<div class="a pv" style="top:430.26px"><span class="hex">HEX</span><b class="hb">EFFFE9</b></div>

<div class="a pn" style="top:445.38px"><i class="n">セ</i><i class="n">ル</i><i class="n">フ</i>RAM<i class="k">領</i><i class="k">域</i><i class="h">へ</i><i class="h">の</i><i class="k">配</i><i class="k">置</i><i class="h">を</i><i class="k">制</i><i class="k">御</i><i class="h">す</i><i class="h">る</i></div>
<div class="a pv" style="top:445.38px"><i class="h">い</i><i class="h">い</i><i class="h">え</i></div>

<div class="a pn" style="top:460.50px"><i class="n">ト</i><i class="n">レ</i><i class="n">ー</i><i class="n">ス</i>RAM<i class="k">領</i><i class="k">域</i><i class="h">へ</i><i class="h">の</i><i class="k">配</i><i class="k">置</i><i class="h">を</i><i class="k">制</i><i class="k">御</i><i class="h">す</i><i class="h">る</i></div>
<div class="a pv bold" style="top:460.50px"><i class="h">は</i><i class="h">い</i>(<i class="n">エ</i><i class="n">ラ</i><i class="n">ー</i><i class="h">を</i><i class="k">表</i><i class="k">示</i>)(-OCDTR)</div>
<svg class="a" style="left:286px;top:478.62px" width="8" height="10" viewBox="0 0 8 10"><path d="M2.5 1.5 L6.5 5 L2.5 8.5 Z" fill="none" stroke="#9A9A9A" stroke-width="1"/></svg>
<div class="a cat" style="top:475.62px"><i class="k">出</i><i class="k">力</i><i class="n">コ</i><i class="n">ー</i><i class="n">ド</i></div>
<svg class="a" style="left:286px;top:493.74px" width="8" height="10" viewBox="0 0 8 10"><path d="M2.5 1.5 L6.5 5 L2.5 8.5 Z" fill="none" stroke="#9A9A9A" stroke-width="1"/></svg>
<div class="a cat" style="top:490.74px"><i class="n">リ</i><i class="n">ス</i><i class="n">ト</i></div>
<svg class="a" style="left:286px;top:508.86px" width="8" height="10" viewBox="0 0 8 10"><path d="M2.5 1.5 L6.5 5 L2.5 8.5 Z" fill="none" stroke="#9A9A9A" stroke-width="1"/></svg>
<div class="a cat" style="top:505.86px"><i class="k">変</i><i class="k">数</i><i class="k">／</i><i class="k">関</i><i class="k">数</i><i class="k">配</i><i class="k">置</i><i class="k">情</i><i class="k">報</i></div>
<svg class="a" style="left:286px;top:523.98px" width="8" height="10" viewBox="0 0 8 10"><path d="M2.5 1.5 L6.5 5 L2.5 8.5 Z" fill="none" stroke="#9A9A9A" stroke-width="1"/></svg>
<div class="a cat" style="top:520.98px"><i class="n">セ</i><i class="n">ク</i><i class="n">シ</i><i class="n">ョ</i><i class="n">ン</i></div>
<svg class="a" style="left:286px;top:539.10px" width="8" height="10" viewBox="0 0 8 10"><path d="M2.5 1.5 L6.5 5 L2.5 8.5 Z" fill="none" stroke="#9A9A9A" stroke-width="1"/></svg>
<div class="a cat" style="top:536.10px"><i class="n">ベ</i><i class="n">リ</i><i class="n">フ</i><i class="n">ァ</i><i class="n">イ</i></div>
<svg class="a" style="left:286px;top:554.22px" width="8" height="10" viewBox="0 0 8 10"><path d="M2.5 1.5 L6.5 5 L2.5 8.5 Z" fill="none" stroke="#9A9A9A" stroke-width="1"/></svg>
<div class="a cat" style="top:551.22px"><i class="n">メ</i><i class="n">ッ</i><i class="n">セ</i><i class="n">ー</i><i class="n">ジ</i></div>
<svg class="a" style="left:286px;top:570.34px" width="8" height="8" viewBox="0 0 8 8"><path d="M7 1 L7 7 L1 7 Z" fill="#3A3A3A"/></svg>
<div class="a cat" style="top:566.34px"><i class="h">そ</i><i class="h">の</i><i class="k">他</i></div>

<div class="a pn" style="top:581.46px"><i class="n">ス</i><i class="n">タ</i><i class="n">ッ</i><i class="n">ク</i><i class="k">情</i><i class="k">報</i><i class="n">フ</i><i class="n">ァ</i><i class="n">イ</i><i class="n">ル</i><i class="h">を</i><i class="k">出</i><i class="k">力</i><i class="h">す</i><i class="h">る</i></div>
<div class="a pv" style="top:581.46px"><i class="h">い</i><i class="h">い</i><i class="h">え</i></div>

<div class="a pn" style="top:596.58px"><i class="n">リ</i><i class="n">ン</i><i class="n">カ</i><i class="h">の</i><i class="n">メ</i><i class="n">モ</i><i class="n">リ</i><i class="k">使</i><i class="k">用</i><i class="k">量</i><i class="h">を</i><i class="k">削</i><i class="k">減</i><i class="h">す</i><i class="h">る</i></div>
<div class="a pv" style="top:596.58px"><i class="h">い</i><i class="h">い</i><i class="h">え</i>(-MEMory=High)</div>

<div class="a pn" style="top:611.70px"><i class="k">合</i><i class="k">計</i><i class="n">セ</i><i class="n">ク</i><i class="n">シ</i><i class="n">ョ</i><i class="n">ン</i><i class="n">・</i><i class="n">サ</i><i class="n">イ</i><i class="n">ズ</i><i class="h">を</i><i class="k">表</i><i class="k">示</i><i class="h">す</i><i class="h">る</i></div>
<div class="a pv bold" style="top:611.70px"><i class="h">は</i><i class="h">い</i>(-Total_size)</div>

<div class="a pn" style="top:626.82px"><i class="n">コ</i><i class="n">ピ</i><i class="n">ー</i><i class="n">ラ</i><i class="n">イ</i><i class="n">ト</i><i class="k">情</i><i class="k">報</i><i class="h">を</i><i class="k">表</i><i class="k">示</i><i class="h">す</i><i class="h">る</i></div>
<div class="a pv" style="top:626.82px"><i class="h">い</i><i class="h">い</i><i class="h">え</i>(-NOLOgo)</div>
<div class="a" id="dline"></div>
<div class="a" id="desc"></div>
<div class="a dtext dbold" style="top:645px;font-weight:bold"><i class="n">デ</i><i class="n">バ</i><i class="n">ッ</i><i class="n">グ</i><i class="k">情</i><i class="k">報</i><i class="h">を</i><i class="k">出</i><i class="k">力</i><i class="h">す</i><i class="h">る</i></div>
<div class="a dtext" style="top:660px"><i class="n">デ</i><i class="n">バ</i><i class="n">ッ</i><i class="n">グ</i><i class="k">情</i><i class="k">報</i><i class="h">を</i><i class="k">出</i><i class="k">力</i><i class="h">す</i><i class="h">る</i><i class="h">か</i><i class="h">ど</i><i class="h">う</i><i class="h">か</i><i class="h">を</i><i class="k">選</i><i class="k">択</i><i class="h">し</i><i class="h">ま</i><i class="h">す</i><i class="h">。</i></div>
<div class="a dtext" style="top:674px">rlink<i class="n">コ</i><i class="n">マ</i><i class="n">ン</i><i class="n">ド</i><i class="h">の</i><i class="h">－</i>NODEBug<i class="n">オ</i><i class="n">プ</i><i class="n">シ</i><i class="n">ョ</i><i class="n">ン</i><i class="h">、</i><i class="h">－</i>DEBug<i class="n">オ</i><i class="n">プ</i><i class="n">シ</i><i class="n">ョ</i><i class="n">ン</i><i class="h">に</i><i class="k">相</i><i class="k">当</i><i class="h">し</i><i class="h">ま</i><i class="h">す</i><i class="h">。</i></div>
<div class="a" id="btabs"></div>
<svg width="0" height="0" style="position:absolute"><defs><linearGradient id="tabg" x1="0" y1="0" x2="0" y2="1"><stop offset="0" stop-color="#BCC3C8"/><stop offset=".5" stop-color="#D8DAD2"/><stop offset=".9" stop-color="#E8EAE6"/><stop offset="1" stop-color="#F4F8FA"/></linearGradient><linearGradient id="tabact" x1="0" y1="0" x2="0" y2="1"><stop offset="0" stop-color="#FFFFFF"/><stop offset=".6" stop-color="#F6F6F6"/><stop offset="1" stop-color="#DCDCDC"/></linearGradient></defs></svg><svg class="a" style="left:848px;top:705px" width="198" height="20" viewBox="0 0 198 20"><path d="M0.5 0 L8 19 L190 19 L197.5 0" fill="url(#tabg)" stroke="#6E7E90" stroke-width="1.2"/></svg>
<div class="a btext" style="left:862px;">I/O<i class="n">ヘ</i><i class="n">ッ</i><i class="n">ダ</i><i class="n">・</i><i class="n">フ</i><i class="n">ァ</i><i class="n">イ</i><i class="n">ル</i><i class="k">生</i><i class="k">成</i><i class="n">オ</i><i class="n">プ</i><i class="n">シ</i><i class="n">ョ</i><i class="n">ン</i></div>
<svg class="a" style="left:723px;top:705px" width="132" height="20" viewBox="0 0 132 20"><path d="M0.5 0 L8 19 L124 19 L131.5 0" fill="url(#tabg)" stroke="#6E7E90" stroke-width="1.2"/></svg>
<div class="a btext" style="left:733px;"><i class="n">ヘ</i><i class="n">キ</i><i class="n">サ</i><i class="k">出</i><i class="k">力</i><i class="n">オ</i><i class="n">プ</i><i class="n">シ</i><i class="n">ョ</i><i class="n">ン</i></div>
<svg class="a" style="left:496px;top:705px" width="133" height="20" viewBox="0 0 133 20"><path d="M0.5 0 L8 19 L125 19 L132.5 0" fill="url(#tabg)" stroke="#6E7E90" stroke-width="1.2"/></svg>
<div class="a btext" style="left:507px;"><i class="n">ア</i><i class="n">セ</i><i class="n">ン</i><i class="n">ブ</i><i class="n">ル</i><i class="n">・</i><i class="n">オ</i><i class="n">プ</i><i class="n">シ</i><i class="n">ョ</i><i class="n">ン</i></div>
<svg class="a" style="left:371px;top:705px" width="132" height="20" viewBox="0 0 132 20"><path d="M0.5 0 L8 19 L124 19 L131.5 0" fill="url(#tabg)" stroke="#6E7E90" stroke-width="1.2"/></svg>
<div class="a btext" style="left:383px;"><i class="n">コ</i><i class="n">ン</i><i class="n">パ</i><i class="n">イ</i><i class="n">ル</i><i class="n">・</i><i class="n">オ</i><i class="n">プ</i><i class="n">シ</i><i class="n">ョ</i><i class="n">ン</i></div>
<svg class="a" style="left:276px;top:705px" width="102" height="20" viewBox="0 0 102 20"><path d="M0.5 0 L8 19 L94 19 L101.5 0" fill="url(#tabg)" stroke="#6E7E90" stroke-width="1.2"/></svg>
<div class="a btext" style="left:290px;"><i class="k">共</i><i class="k">通</i><i class="n">オ</i><i class="n">プ</i><i class="n">シ</i><i class="n">ョ</i><i class="n">ン</i></div>
<svg class="a" style="left:622px;top:705px" width="108" height="20" viewBox="0 0 108 20"><path d="M0.5 0 L8 19 L100 19 L107.5 0" fill="url(#tabact)" stroke="#6E7E90" stroke-width="1.2"/></svg>
<div class="a btext" style="left:634px;font-weight:bold;color:#000"><i class="n">リ</i><i class="n">ン</i><i class="n">ク</i><i class="n">・</i><i class="n">オ</i><i class="n">プ</i><i class="n">シ</i><i class="n">ョ</i><i class="n">ン</i></div>
<div class="a" id="wstrip"></div>
<div class="a" id="ohead"></div>
<div class="a" style="left:278px;top:730px;line-height:18px;font-size:12.5px;color:#222"><i class="k">出</i><i class="k">力</i></div>
<div class="a" id="oline"></div>
<div class="a" id="out"></div>
<div class="a otext" style="top:753.00px">RAMDATA SECTION:  00000000 Byte(s)<i class="ret"><svg width="9" height="13" viewBox="0 0 8 12"><path d="M6.5 1 V8.5 H1.5 M3.5 6.5 L1.5 8.5 L3.5 10.5" stroke="#DCE6F2" stroke-width="1" fill="none"/></svg></i></div>
<div class="a otext" style="top:768.35px">ROMDATA SECTION:  0000028e Byte(s)<i class="ret"><svg width="9" height="13" viewBox="0 0 8 12"><path d="M6.5 1 V8.5 H1.5 M3.5 6.5 L1.5 8.5 L3.5 10.5" stroke="#DCE6F2" stroke-width="1" fill="none"/></svg></i></div>
<div class="a otext" style="top:783.70px">PROGRAM SECTION:  000000f1 Byte(s)<i class="ret"><svg width="9" height="13" viewBox="0 0 8 12"><path d="M6.5 1 V8.5 H1.5 M3.5 6.5 L1.5 8.5 L3.5 10.5" stroke="#DCE6F2" stroke-width="1" fill="none"/></svg></i></div>
<div class="a otext" style="top:799.05px">The evaluation version is valid for the remaining 23 days.<i class="ret"><svg width="9" height="13" viewBox="0 0 8 12"><path d="M6.5 1 V8.5 H1.5 M3.5 6.5 L1.5 8.5 L3.5 10.5" stroke="#DCE6F2" stroke-width="1" fill="none"/></svg></i></div>
<div class="a otext" style="top:814.40px">Renesas Optimizing Linker Completed<i class="ret"><svg width="9" height="13" viewBox="0 0 8 12"><path d="M6.5 1 V8.5 H1.5 M3.5 6.5 L1.5 8.5 L3.5 10.5" stroke="#DCE6F2" stroke-width="1" fill="none"/></svg></i></div>
<div class="a rbox" style="left:295px;top:427px;width:781px;height:19px"></div>
<div class="a rbox" style="left:295px;top:611px;width:775px;height:18px"></div>
<div class="a rbox" style="left:628px;top:702px;width:99px;height:32px"></div>
<div class="a ybox" style="left:280px;top:746px;width:296px;height:53px"></div>
</body></html>
